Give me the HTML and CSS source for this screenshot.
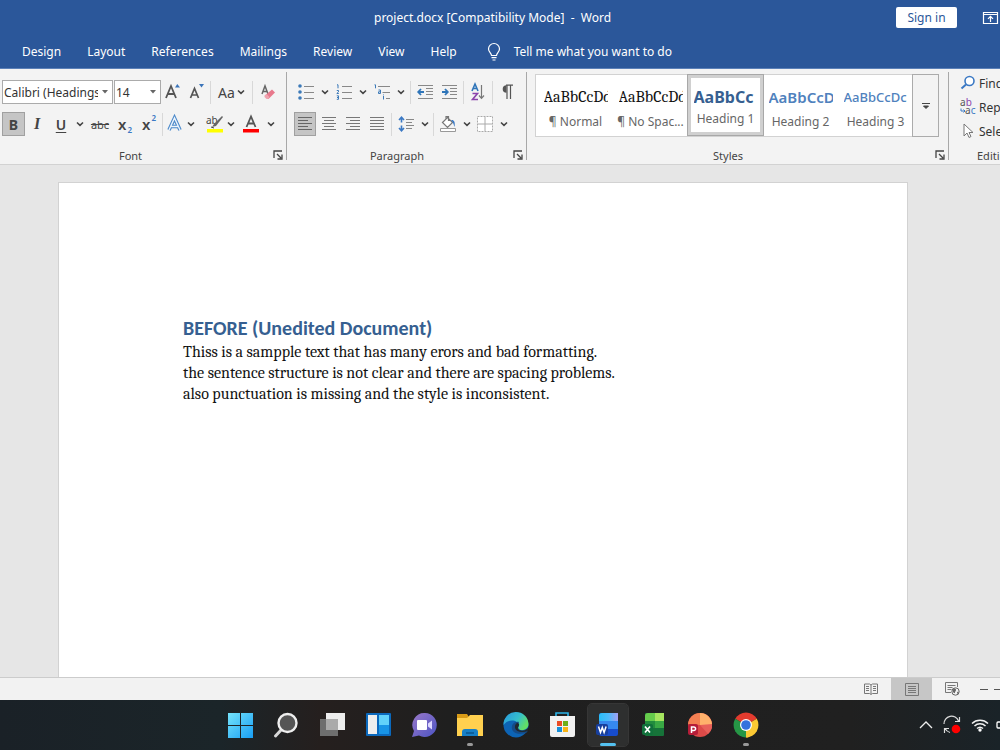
FILE: index.html
```html
<!DOCTYPE html>
<html lang="en">
<head>
<meta charset="utf-8">
<title>project.docx [Compatibility Mode] - Word</title>
<link rel="stylesheet" href="styles.css">
</head>
<body>
<svg class="defs" aria-hidden="true">
  <symbol id="chev" viewBox="0 0 8 8"><path d="M1 2.500 4 5.300l3-2.800" fill="none" stroke="#444" stroke-width="1.600"/></symbol>
  <symbol id="launch" viewBox="0 0 10 10"><path d="M1 8V1h8M4 4l4 4M9 4.500V9H4.500" fill="none" stroke="#444" stroke-width="1.300"/></symbol>
  <symbol id="drop" viewBox="0 0 6 4"><path d="M0 0h6L3 3.500z" fill="#666"/></symbol>
</svg>

<header class="titlebar">
  <div class="title">project.docx [Compatibility Mode] &nbsp;-&nbsp; Word</div>
  <button class="signin">Sign in</button>
  <button class="plain display-opts" aria-label="Ribbon display options"><svg width="15" height="12" viewBox="0 0 15 12"><path d="M.5.500h14v11H.500zM.5 2.500h14M7.500 10V4.500M5 6.800l2.500-2.500L10 6.800" fill="none" stroke="#fff" stroke-width="1.200"/></svg></button>
</header>
<nav class="tabs">
  <a href="#">Design</a><a href="#">Layout</a><a href="#">References</a><a href="#">Mailings</a><a href="#">Review</a><a href="#">View</a><a href="#">Help</a>
  <button class="plain tell"><svg width="14" height="18" viewBox="0 0 14 18"><path d="M4.500 12.500c0-2.500-3-3.500-3-6.500a5.500 5.500 0 0 1 11 0c0 3-3 4-3 6.500zM4.500 14.700h5M5.500 17h3" fill="none" stroke="#fff" stroke-width="1.200"/></svg>Tell me what you want to do</button>
</nav>

<section class="ribbon">
  <div class="group font">
    <div class="row">
      <div class="combo family"><select aria-label="Font"><option>Calibri (Headings)</option></select><svg width="6" height="4"><use href="#drop"/></svg></div>
      <div class="combo size"><select aria-label="Font size"><option>14</option></select><svg width="6" height="4"><use href="#drop"/></svg></div>
      <button class="tool" aria-label="Grow font"><svg width="16" height="18" viewBox="0 0 16 18"><path d="M1 15 6 3l5 12M3 11h6" fill="none" stroke="#555" stroke-width="1.800"/><path d="M10 4.500 12.300 1l2.700 3.500z" fill="#3b74b9"/></svg></button>
      <button class="tool" aria-label="Shrink font"><svg width="16" height="18" viewBox="0 0 16 18"><path d="M1.500 15 5.500 5.500 9.500 15M3 12h5" fill="none" stroke="#555" stroke-width="1.700"/><path d="M10 1h5l-2.500 3.500z" fill="#3b74b9"/></svg></button>
      <i class="sep"></i>
      <button class="tool case" aria-label="Change case">Aa<svg width="8" height="8"><use href="#chev"/></svg></button>
      <i class="sep"></i>
      <button class="tool clear" aria-label="Clear formatting"><svg width="16" height="16" viewBox="0 0 16 16"><path d="M2 10 5 2l3 8M3 7.500h4" fill="none" stroke="#666" stroke-width="1.500"/><path d="m5 11.500 7-6 3 3-6.500 6.500z" fill="#e8798c"/><path d="m4.500 11.500 2-1.500 3 3L8 15H6.500L4.500 13z" fill="#f0a3af"/></svg></button>
    </div>
    <div class="row">
      <button class="tool toggled bold" aria-label="Bold">B</button>
      <button class="tool italic" aria-label="Italic">I</button>
      <button class="tool under" aria-label="Underline">U</button>
      <button class="arrow" aria-label="Underline style"><svg width="8" height="8"><use href="#chev"/></svg></button>
      <button class="tool strike" aria-label="Strikethrough">abc</button>
      <button class="tool script" aria-label="Subscript">x<sub>2</sub></button>
      <button class="tool script" aria-label="Superscript">x<sup>2</sup></button>
      <i class="sep"></i>
      <button class="tool effects" aria-label="Text effects"><svg width="15" height="16" viewBox="0 0 15 16"><path d="M2 14 7.500 2 13 14M4.300 10.500h6.500" fill="none" stroke="#4a88ca" stroke-width="3.600"/><path d="M2 14 7.500 2 13 14M4.300 10.500h6.500" fill="none" stroke="#eef5fc" stroke-width="1.400"/></svg></button>
      <button class="arrow" aria-label="Effects options"><svg width="8" height="8"><use href="#chev"/></svg></button>
      <button class="tool mark highlight" aria-label="Highlight"><svg width="18" height="18" viewBox="0 0 18 18"><text x="0" y="9" font-size="10" fill="#444">ab</text><path d="m17 2-7 9-4 1 2-3 8-8z" fill="#666"/><path d="m5 12 3 1" stroke="#444"/><path d="M1 14h16v3.500H1z" fill="#ff0"/></svg></button>
      <button class="arrow" aria-label="Highlight colours"><svg width="8" height="8"><use href="#chev"/></svg></button>
      <button class="tool mark" aria-label="Font colour"><svg width="18" height="18" viewBox="0 0 18 18"><path d="M4.500 12 9 1.500 13.500 12M6 8.500h6" fill="none" stroke="#555" stroke-width="1.800"/><path d="M1 14h16v3.500H1z" fill="#f00"/></svg></button>
      <button class="arrow" aria-label="Font colours"><svg width="8" height="8"><use href="#chev"/></svg></button>
    </div>
    <footer><span>Font</span><button class="plain" aria-label="Font settings"><svg width="10" height="10"><use href="#launch"/></svg></button></footer>
  </div>

  <div class="group para">
    <div class="row">
      <button class="tool" aria-label="Bullets"><svg width="16" height="16" viewBox="0 0 16 16"><g fill="#3b79b8"><circle cx="2" cy="2" r="1.800"/><circle cx="2" cy="8" r="1.800"/><circle cx="2" cy="14" r="1.800"/></g><path d="M6 2.500h10M6 8.500h10M6 14.500h10" stroke="#888"/></svg></button>
      <button class="arrow" aria-label="Bullet styles"><svg width="8" height="8"><use href="#chev"/></svg></button>
      <button class="tool" aria-label="Numbering"><svg width="16" height="16" viewBox="0 0 16 16"><path d="M1 .8h1v3.500M.800 6.500h1.700v1.400L.800 9.500h2M.800 11.800h1.700v3.500H.800M1 13.500h1.500" fill="none" stroke="#3b79b8"/><path d="M6 2.500h10M6 8.500h10M6 14.500h10" stroke="#888"/></svg></button>
      <button class="arrow" aria-label="Numbering styles"><svg width="8" height="8"><use href="#chev"/></svg></button>
      <button class="tool" aria-label="Multilevel list"><svg width="16" height="16" viewBox="0 0 16 16"><path d="M.5.800h1v3.500M4.500 6h2v3.500h-2V7.800h2M9.500 10.500v.8M9.500 12v3.500" fill="none" stroke="#3b79b8"/><path d="M4 2.500h12M8.500 8.500H16M12 14.500h4" stroke="#888"/></svg></button>
      <button class="arrow" aria-label="Multilevel styles"><svg width="8" height="8"><use href="#chev"/></svg></button>
      <i class="sep"></i>
      <button class="tool" aria-label="Decrease indent"><svg width="16" height="16" viewBox="0 0 16 16"><path d="M1 1.500h15M9 4.500h7M9 7.500h7M9 10.500h7M1 14.500h15" stroke="#888"/><path d="M1.500 8H7M4 5 1.200 8 4 11" fill="none" stroke="#2f75b9" stroke-width="1.800"/></svg></button>
      <button class="tool" aria-label="Increase indent"><svg width="16" height="16" viewBox="0 0 16 16"><path d="M1 1.500h15M9 4.500h7M9 7.500h7M9 10.500h7M1 14.500h15" stroke="#888"/><path d="M1 8h5.500M4 5l2.800 3L4 11" fill="none" stroke="#2f75b9" stroke-width="1.800"/></svg></button>
      <i class="sep"></i>
      <button class="tool" aria-label="Sort"><svg width="14" height="18" viewBox="0 0 14 18"><path d="M1 8 4 1l3 7M2 5.500h4" fill="none" stroke="#2f75b9" stroke-width="1.600"/><path d="M1.500 10.500h5l-5 6h5.500" fill="none" stroke="#8a43ac" stroke-width="1.600"/><path d="M10.500 2v13M8 12.500l2.500 2.800L13 12.500" fill="none" stroke="#777" stroke-width="1.200"/></svg></button>
      <i class="sep"></i>
      <button class="tool" aria-label="Show paragraph marks"><svg width="12" height="16" viewBox="0 0 12 16"><path d="M5.500 1.200v7.600a3.800 3.800 0 0 1 0-7.600z" fill="#555"/><path d="M5 1.200h7M6 1v14M9.500 1v14" fill="none" stroke="#555" stroke-width="1.200"/></svg></button>
    </div>
    <div class="row tight">
      <button class="tool toggled" aria-label="Align left"><svg width="16" height="16" viewBox="0 0 16 16"><path d="M1 1.500h14M1 4.500h10M1 7.500h14M1 10.500h10M1 13.500h14" stroke="#666"/></svg></button>
      <button class="tool" aria-label="Centre"><svg width="16" height="16" viewBox="0 0 16 16"><path d="M1 1.500h14M3 4.500h10M1 7.500h14M3 10.500h10M1 13.500h14" stroke="#777"/></svg></button>
      <button class="tool" aria-label="Align right"><svg width="16" height="16" viewBox="0 0 16 16"><path d="M1 1.500h14M5 4.500h10M1 7.500h14M5 10.500h10M1 13.500h14" stroke="#777"/></svg></button>
      <button class="tool" aria-label="Justify"><svg width="16" height="16" viewBox="0 0 16 16"><path d="M1 1.500h14M1 4.500h14M1 7.500h14M1 10.500h14M1 13.500h14" stroke="#777"/></svg></button>
      <i class="sep"></i>
      <button class="tool" aria-label="Line spacing"><svg width="16" height="16" viewBox="0 0 16 16"><path d="M3.500 1.500v5M3.500 9.500v5M1 4l2.500-2.700L6 4M1 12l2.500 2.700L6 12" fill="none" stroke="#3b79c4" stroke-width="1.600"/><path d="M8 3.500h8M8 6.500h6M8 9.500h8M8 12.500h6" stroke="#888"/></svg></button>
      <button class="arrow" aria-label="Spacing options"><svg width="8" height="8"><use href="#chev"/></svg></button>
      <i class="sep"></i>
      <button class="tool" aria-label="Shading"><svg width="18" height="18" viewBox="0 0 18 18"><path d="m3.500 7.500 5-5 5 5-5 5zM7 4V1.500h2.500V6" fill="#fff" stroke="#777" stroke-width="1.200"/><path d="M12 5c3-.5 4.500 2 3.500 7-1-3-1-4-3.500-7z" fill="#3b79c4"/><path d="M1.500 13.500h15v3h-15z" fill="#fff" stroke="#999"/></svg></button>
      <button class="arrow" aria-label="Shading colours"><svg width="8" height="8"><use href="#chev"/></svg></button>
      <button class="tool" aria-label="Borders"><svg width="16" height="16" viewBox="0 0 16 16"><path d="M.5.500h15v15H.500z" fill="#fff" stroke="#aaa" stroke-dasharray="2 1"/><path d="M8 1v14M1 8h14" stroke="#aaa"/></svg></button>
      <button class="arrow" aria-label="Border options"><svg width="8" height="8"><use href="#chev"/></svg></button>
    </div>
    <footer><span>Paragraph</span><button class="plain" aria-label="Paragraph settings"><svg width="10" height="10"><use href="#launch"/></svg></button></footer>
  </div>

  <div class="group styles">
    <div class="gallery">
      <button class="tile"><b class="serif">AaBbCcDd</b><span>¶ Normal</span></button>
      <button class="tile"><b class="serif">AaBbCcDd</b><span>¶ No Spac...</span></button>
      <button class="tile chosen"><b class="h1">AaBbCc</b><span>Heading 1</span></button>
      <button class="tile"><b class="h2">AaBbCcD</b><span>Heading 2</span></button>
      <button class="tile"><b class="h3">AaBbCcDc</b><span>Heading 3</span></button>
      <button class="more" aria-label="More styles"><svg width="8" height="8" viewBox="0 0 8 8"><path d="M0 1.500h8M1.500 4 4 6.500 6.500 4z" fill="#444" stroke="#444"/></svg></button>
    </div>
    <footer><span>Styles</span><button class="plain" aria-label="Styles pane"><svg width="10" height="10"><use href="#launch"/></svg></button></footer>
  </div>

  <div class="group editing">
    <button class="edit"><svg width="16" height="16" viewBox="0 0 16 16"><circle cx="9.500" cy="6" r="4.500" fill="#fff" stroke="#3b79c4" stroke-width="1.600"/><path d="m6 9.500-4.500 4" stroke="#3b79c4" stroke-width="2"/></svg>Find</button>
    <button class="edit"><svg width="16" height="16" viewBox="0 0 16 16"><text x="0" y="7" font-size="10" fill="#555">a<tspan fill="#8a43ac">b</tspan></text><text x="5" y="15" font-size="10" fill="#555">a<tspan fill="#3b79c4">c</tspan></text><path d="M1 9.500v2.500h4M3.500 10.500 5 12l-1.500 1.500" fill="none" stroke="#3b79c4"/></svg>Replace</button>
    <button class="edit"><svg width="16" height="16" viewBox="0 0 16 16"><path d="M4 1v12l3-3 2 4.500 2-1L9 9.500h4z" fill="#fff" stroke="#777"/></svg>Select</button>
    <footer><span>Editing</span></footer>
  </div>
</section>

<main class="workspace">
  <article class="page">
    <h1>BEFORE (Unedited Document)</h1>
    <p>Thiss is a sampple text that has many erors and bad formatting.<br>the sentence structure is not clear and there are spacing problems.<br>also punctuation is missing and the style is inconsistent.</p>
  </article>
</main>

<div class="status">
  <button class="view" aria-label="Read mode"><svg width="14" height="12" viewBox="0 0 14 12"><path d="M.5 1h5L7 2l1.500-1h5v9.500h-5L7 11.500l-1.500-1h-5zM7 2v9M2 3.500h3M2 5.500h3M2 7.500h3M9 3.500h3M9 5.500h3M9 7.500h3" fill="none" stroke="#777"/></svg></button>
  <button class="view current" aria-label="Print layout"><svg width="14" height="13" viewBox="0 0 14 13"><path d="M.5.500h13v12H.500zM3 3.500h8M3 5.500h8M3 7.500h8M3 9.500h8" fill="none" stroke="#777"/></svg></button>
  <button class="view" aria-label="Web layout"><svg width="15" height="14" viewBox="0 0 15 14"><path d="M6 10.500H.500V.500h12V5M2.500 3.500h8M2.500 5.500h5M2.500 7.500h4" fill="none" stroke="#777"/><circle cx="10.500" cy="9.500" r="3.700" fill="#f2f2f2" stroke="#666"/><path d="M8 7.500c1-1.500 3-1 3 .500s-1 1-1 2.500-1 .5-2.500-1zM12 10l2-.5-1.500 3z" fill="#666"/></svg></button>
  <button class="zoom" aria-label="Zoom out"></button>
  <i class="track"></i>
</div>

<nav class="taskbar">
  <div class="apps">
    <button aria-label="Start"><svg width="26" height="26" viewBox="0 0 26 26"><defs><linearGradient id="win" x2="1" y2="1"><stop stop-color="#75e4fb"/><stop offset="1" stop-color="#189ef4"/></linearGradient></defs><path d="M1 1h12v12H1zM14 1h12v12H14zM1 14h12v12H1zM14 14h12v12H14z" fill="url(#win)"/></svg></button>
    <button aria-label="Search"><svg width="26" height="26" viewBox="0 0 26 26"><path d="m9 17-6.500 7" stroke="#d8d8d8" stroke-width="3" stroke-linecap="round"/><circle cx="14.500" cy="11" r="9" fill="#555" stroke="#eee" stroke-width="2.400"/></svg></button>
    <button aria-label="Task view"><svg width="26" height="26" viewBox="0 0 26 26"><path d="M7 1h19v17H7z" fill="#ededed"/><path d="M1 7h18v17H1z" fill="#777" fill-opacity=".9"/><path d="M7 7h12v11H7z" fill="#aaa"/></svg></button>
    <button aria-label="Widgets"><svg width="26" height="26" viewBox="0 0 26 26"><rect x="1" y="1" width="25" height="23" rx="1" fill="#0b69bd"/><path d="M3 3h9v19H3z" fill="#eee"/><path d="M14 3h10v10H14z" fill="#62d1fa"/><path d="M14 13h10v9H14z" fill="#1894e6"/></svg></button>
    <button aria-label="Chat"><svg width="26" height="26" viewBox="0 0 26 26"><defs><linearGradient id="chat" x2="1" y2="1"><stop stop-color="#9a78c8"/><stop offset="1" stop-color="#4c54c4"/></linearGradient></defs><path d="M14 1a12 12 0 1 1-6 22.500L1 25l2-6A12 12 0 0 1 14 1z" fill="url(#chat)"/><rect x="6" y="8" width="10" height="10" rx="1" fill="#fff"/><path d="m17 11.500 4-3v9l-4-3z" fill="#ddd8ff"/></svg></button>
    <button class="running" aria-label="File Explorer"><svg width="26" height="26" viewBox="0 0 26 26"><path d="M0 2h10l2 3-2 3H0z" fill="#d99b17"/><path d="M0 6h10l3-3h13v21H0z" fill="#ffd04f"/><path d="M5 24v-4a3 3 0 0 1 3-3h10a3 3 0 0 1 3 3v4z" fill="#167fc6"/><path d="M9 21h8" stroke="#09538c" stroke-width="1.500"/></svg></button>
    <button aria-label="Edge"><svg width="26" height="26" viewBox="0 0 26 26"><defs><linearGradient id="edge" x2="1" y2=".5"><stop stop-color="#2797df"/><stop offset=".6" stop-color="#35bfcd"/><stop offset="1" stop-color="#62df66"/></linearGradient></defs><circle cx="13" cy="13" r="12.500" fill="#0d64b5"/><path d="M.5 13a12.500 12.500 0 0 1 25-1c0 5-5 7-9 6-2-.5-2-1.500-1-3C18 9 6 5 .5 13z" fill="url(#edge)"/><path d="M16 10c-4-1-8 2-7 7 1 4 6 6 14 4 1-1 2-2 2-3-6 3-13-1-9-8z" fill="#154b87"/><path d="M15 11c3 2-1 4 0 6s6 3 10-1v3c-6 2-12 1-13-3-.5-3 1-5 3-5z" fill="#20282d"/></svg></button>
    <button aria-label="Store"><svg width="26" height="26" viewBox="0 0 26 26"><path d="M7 5V1h12v4" fill="none" stroke="#2bb3e8" stroke-width="1.600"/><path d="M1 4h25v19a2 2 0 0 1-2 2H3a2 2 0 0 1-2-2z" fill="#f1f1f1"/><path d="M8 9h5v5H8z" fill="#ea4c24"/><path d="M14 9h5v5h-5z" fill="#6eae18"/><path d="M8 15h5v5H8z" fill="#168fd9"/><path d="M14 15h5v5h-5z" fill="#f9b516"/></svg></button>
    <button class="running active" aria-label="Word"><svg width="26" height="26" viewBox="0 0 26 26"><defs><linearGradient id="wtop" x2="1"><stop stop-color="#28bdf7"/><stop offset=".5" stop-color="#4cb9fa"/><stop offset="1" stop-color="#a2a0f4"/></linearGradient></defs><rect x="4" y="1" width="19" height="23" rx="2" fill="#174ccc"/><path d="M4 9V4a3 3 0 0 1 3-3h16v8z" fill="url(#wtop)"/><path d="M4 9h19v8H4z" fill="#3688ee"/><rect x="1" y="12" width="12" height="11" rx="2" fill="#173f9e"/><path d="m3.500 14.500 2 6 1.800-5 1.800 5 2-6" fill="none" stroke="#fff" stroke-width="1.500"/></svg></button>
    <button aria-label="Excel"><svg width="26" height="26" viewBox="0 0 26 26"><rect x="4" y="1" width="19" height="23" rx="1" fill="#167339"/><path d="M4 9V4a3 3 0 0 1 3-3h7v8z" fill="#66cc4c"/><path d="M14 1h9v8h-9z" fill="#a6e55f"/><path d="M14 9h9v7h-9z" fill="#39a944"/><path d="M4 9h10v7H4z" fill="#218c3d"/><rect x="1" y="12" width="11" height="11" rx="2" fill="#10713b"/><path d="m4 14.500 5 6m0-6-5 6" stroke="#fff" stroke-width="1.700"/></svg></button>
    <button aria-label="PowerPoint"><svg width="26" height="26" viewBox="0 0 26 26"><circle cx="13" cy="13" r="12" fill="#dc4a48"/><path d="M13 1v12l8 9a12 12 0 0 0-8-21z" fill="#e8605a"/><path d="M13 1v12l12-1A12 12 0 0 0 13 1z" fill="#ffb16b"/><path d="M13 1A12 12 0 0 0 1 12l12 1z" fill="#f38052"/><rect x="1" y="12" width="10" height="11" rx="2" fill="#b51d38"/><path d="M4.500 21v-6h2.300a1.700 1.700 0 0 1 0 3.600H4.500" fill="none" stroke="#fff" stroke-width="1.500"/></svg></button>
    <button class="running" aria-label="Chrome"><svg width="26" height="26" viewBox="0 0 26 26"><path d="M13 13 2.200 6.800a12.500 12.500 0 0 1 21.600 0z" fill="#e33b2e"/><path d="M13 13 23.800 6.800A12.500 12.500 0 0 1 13 25.500z" fill="#fcc934"/><path d="M13 13v12.500A12.500 12.500 0 0 1 2.200 6.800z" fill="#269646"/><path d="M13 7h10.900L22 5H12z" fill="#e33b2e"/><path d="m18.200 16-5.200 9.500h2l7-6z" fill="#fcc934"/><path d="m7.800 16-5.600-9.200v8z" fill="#269646"/><circle cx="13" cy="13" r="6" fill="#fff"/><circle cx="13" cy="13" r="4.800" fill="#3472dd"/></svg></button>
  </div>
  <div class="tray">
    <svg width="14" height="8" viewBox="0 0 14 8"><path d="m1 7 6-6 6 6" fill="none" stroke="#eee" stroke-width="1.300"/></svg>
    <svg width="18" height="18" viewBox="0 0 18 18"><path d="M1 8A7.500 7.500 0 0 1 15.500 5M16.500 1v4.500H12M7 16.500A8 8 0 0 1 2 12.500M1.500 17v-4.500H6" fill="none" stroke="#ddd" stroke-width="1.200"/><circle cx="13" cy="13" r="4.300" fill="#f00"/></svg>
    <svg width="18" height="14" viewBox="0 0 18 14"><path d="M1 5.500a11.500 11.500 0 0 1 16 0M3.500 8a8 8 0 0 1 11 0M6 10.500a4.500 4.500 0 0 1 6 0" fill="none" stroke="#f2f2f2" stroke-width="1.500"/><circle cx="9" cy="12" r="1.700" fill="#fff"/></svg>
    <svg class="battery" width="14" height="8" viewBox="0 0 14 8"><rect x="1" y="1" width="12" height="6" rx="1" fill="none" stroke="#fff" stroke-width="1.300"/></svg>
  </div>
</nav>
</body>
</html>
```
FILE: styles.css
```css
* { box-sizing: border-box; }
body {
  margin: 0;
  height: 100vh;
  display: flex;
  flex-direction: column;
  overflow: hidden;
  font-family: "Noto Sans", "Open Sans", sans-serif;
  font-size: 12px;
  color: #444;
  background: #e6e6e6;
}
button, select { font: inherit; color: inherit; margin: 0; padding: 0; border: 0; background: none; }
svg { display: block; flex: none; overflow: visible; }
.defs { width: 0; height: 0; position: absolute; }
.plain { display: flex; align-items: center; }

.titlebar {
  display: flex;
  align-items: center;
  height: 35px;
  background: #2b579a;
  color: #fff;
  flex: none;
  overflow: hidden;
}
.title { flex: 1; padding-left: 374px; white-space: nowrap; }
.signin { width: 61px; height: 21px; background: #fff; color: #2b579a; border-radius: 2px; }
.display-opts { margin-left: 26px; width: 17px; flex: none; }

.tabs {
  display: flex;
  align-items: center;
  gap: 26px;
  height: 34px;
  padding-left: 22px;
  background: #2b579a;
  border-bottom: 1px solid #5b80b8;
  flex: none;
}
.tabs a { color: #fff; text-decoration: none; }
.tell { color: #fff; gap: 13px; margin-left: 4px; }

.ribbon {
  display: flex;
  height: 96px;
  flex: none;
  background: #f3f3f3;
  border-bottom: 1px solid #d2d2d2;
  overflow: hidden;
}
.group { display: flex; flex-direction: column; flex: none; padding-top: 7px; position: relative; }
.group::after { content: ""; position: absolute; right: 0; top: 3px; bottom: 4px; width: 1px; background: #a8a8a8; }
.font { width: 287px; padding-left: 2px; }
.para { width: 240px; padding-left: 8px; }
.styles { width: 422px; padding: 5px 0 0 8px; }
.editing { flex: 1 0 80px; padding: 2px 0 0 11px; }
.editing::after { display: none; }
.row { display: flex; align-items: center; height: 32px; }
.tool { display: flex; align-items: center; justify-content: center; width: 24px; height: 24px; flex: none; }
.arrow { display: flex; align-items: center; justify-content: center; width: 14px; height: 24px; flex: none; }
.toggled { width: 22px; background: #c5c5c5; border: 1px solid #a0a0a0; }
.font .toggled { width: 23px; }
.sep { width: 1px; height: 23px; background: #d8d8d8; margin: 0 1px; flex: none; }
.combo { position: relative; height: 24px; background: #fff; border: 1px solid #ababab; flex: none; }
.combo select { appearance: none; width: 100%; height: 22px; padding-left: 1px; color: #333; outline: 0; }
.combo svg { position: absolute; right: 4px; top: 9px; }
.family { width: 111px; margin-right: 1px; }
.family select { width: 95px; overflow: hidden; text-overflow: clip; }
.size { width: 47px; }
.case { width: 39px; font-size: 14px; gap: 2px; }
.clear { width: 28px; }
.bold { font-size: 14px; font-weight: 700; }
.italic { font: italic 700 16px "Liberation Serif", serif; }
.under { font-size: 14px; font-weight: 600; text-decoration: underline; text-underline-offset: 2px; }
.strike { width: 26px; font-size: 11px; text-decoration: line-through; }
.script { font-size: 15px; font-weight: 600; gap: 1px; }
.script sub, .script sup { font-size: 8px; line-height: 12px; color: #3b79c4; }
.script sub { align-self: flex-end; }
.script sup { align-self: flex-start; }
.effects { width: 20px; }
.mark { width: 26px; }
.highlight { justify-content: flex-end; }
.ribbon footer { display: flex; align-items: center; margin-top: auto; height: 18px; padding-right: 4px; }
.ribbon footer span { flex: 1; padding-right: 14px; text-align: center; font-size: 11px; }

.para .row { margin-left: -1px; }
.para .sep { margin: 0 2px; }
.tight .toggled { margin-right: 1px; }
.tight .arrow { width: 13px; }

.gallery { display: flex; height: 63px; width: 404px; background: #fff; border: 1px solid #d2d2d2; padding-left: 2px; }
.tile { width: 75px; flex: none; display: flex; flex-direction: column; align-items: center; justify-content: flex-start; padding: 10px 5px 0; color: #666; }
.tile b { display: block; width: 64px; height: 24px; line-height: 24px; overflow: hidden; white-space: nowrap; text-align: left; font-weight: 400; }
.tile span { white-space: nowrap; line-height: 26px; }
.tile .serif { font-family: Cambria, Caladea, "Liberation Serif", serif; font-size: 16px; color: #111; }
.tile .h1 { font-size: 16px; font-weight: 700; color: #365f91; }
.tile .h2 { font-size: 15px; font-weight: 600; color: #4f81bd; }
.tile .h3 { font-size: 13px; font-weight: 500; color: #4f81bd; }
.tile.chosen { outline: 1px solid #a8a8a8; border: 3px solid #d0d0d0; padding: 7px 2px 0; margin-bottom: 1px; }
.more { flex: 1; display: flex; align-items: center; justify-content: center; background: #f3f3f3; border: 1px solid #ababab; margin: -1px; }
.edit { display: flex; align-items: center; gap: 3px; height: 24px; color: #333; }
.editing footer { padding-left: 17px; }
.editing footer span { text-align: left; }

.workspace { flex: 1; min-height: 0; display: flex; padding: 17px 92px 0 58px; }
.page { flex: 1; background: #fff; border: 1px solid #d2d2d2; border-bottom: 0; padding: 133px 124px 0; }
.page h1 { margin: 0 0 2px; font: 700 20px/24px Carlito, "Noto Sans", sans-serif; color: #365f91; }
.page p { margin: 0; font: 16px/21px Cambria, Caladea, "Liberation Serif", serif; color: #111; }

.status { display: flex; align-items: center; justify-content: flex-end; height: 23px; flex: none; background: #f2f2f2; border-top: 1px solid #ccc; }
.view { width: 41px; height: 22px; display: flex; align-items: center; justify-content: center; }
.current { background: #c6c6c6; }
.zoom { width: 8px; height: 1px; background: #555; margin: 0 6px 0 7px; }
.track { width: 6px; height: 1px; background: #555; }

.taskbar {
  display: flex;
  align-items: center;
  justify-content: space-between;
  height: 50px;
  flex: none;
  padding-left: 22%;
  background: linear-gradient(90deg, #1a2127, #1b2529 22%, #251f1e 32%, #1f1f1f 45%, #202020 85%, #1a2328);
  overflow: hidden;
}
.apps { display: flex; gap: 6px; }
.apps button { position: relative; width: 40px; height: 42px; display: flex; align-items: center; justify-content: center; border-radius: 4px; }
.apps .running::after { content: ""; position: absolute; bottom: 0; width: 6px; height: 3px; border-radius: 2px; background: #999; }
.apps .active { background: #2e2f2f; outline: 1px solid #363636; }
.apps .active::after { width: 16px; background: #54c1f0; }
.tray { display: flex; align-items: center; gap: 10px; margin-right: -10px; }
.tray .battery { margin-left: -3px; }
```
